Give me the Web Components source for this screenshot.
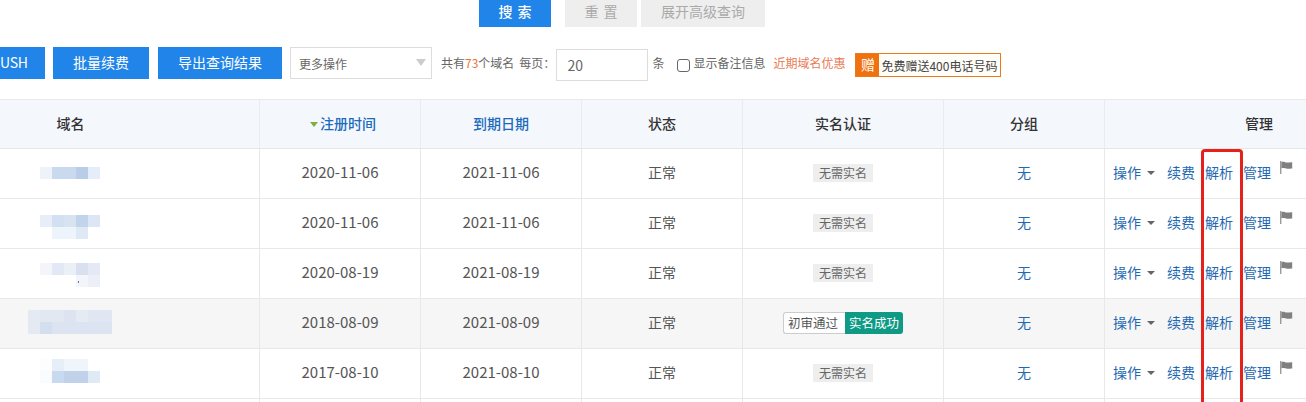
<!DOCTYPE html>
<html lang="zh">
<head>
<meta charset="utf-8">
<title>域名列表</title>
<style>
  html, body { margin: 0; padding: 0; background: #fff; }
  body { width: 1306px; height: 402px; overflow: hidden; font-family: "Noto Sans CJK SC", "Noto Sans", sans-serif; position: relative; }
</style>
</head>
<body>
<search-actions></search-actions>
<list-toolbar></list-toolbar>
<domain-table>
  <domain-row reg="2020-11-06" exp="2021-11-06" top="18" left="40" blocks="eef2f9,c9d9ee,c9d9ee,b9cce8,e5edf8"></domain-row>
  <domain-row reg="2020-11-06" exp="2021-11-06" top="16" left="40" blocks="e8eef8,d3e0f1,d8e3f2,c2d3ec,dde6f4|fff,eef4fb,eef4fb,dfe8f5,fff"></domain-row>
  <domain-row reg="2020-08-19" exp="2021-08-19" top="14" left="40" dot blocks="f3f5fa,e2e8f5,ebeff8,d9e0f0,e5e9f6|fff,fff,fff,f3f5fa,eceff8"></domain-row>
  <domain-row reg="2018-08-09" exp="2021-08-09" top="11" left="28" shade verified blocks="e5eaf2,e1e8f2,e1e8f2,dde4ef,e6ebf3,e0e7f2,e0e7f2|e5eaf2,d3dfee,dbe4f0,dbe4f0,dbe4f0,dbe4f0,dbe4f0"></domain-row>
  <domain-row reg="2017-08-10" exp="2021-08-10" top="10" left="40" blocks="fcfdfe,e6eef8,f0f5fb,f0f5fb,fff|fafbfd,c8daef,bfd2ea,bfd2ea,dfeaf7"></domain-row>
  <domain-row empty></domain-row>
</domain-table>
<red-mark></red-mark>

<script>
const FONT = '"Noto Sans CJK SC", "Noto Sans", sans-serif';

class SearchActions extends HTMLElement {
  constructor() {
    super();
    this.attachShadow({ mode: 'open' });
    this.shadowRoot.innerHTML = `
      <style>
        :host { display: flex; height: 47px; padding-left: 479px; box-sizing: border-box; font-family: ${FONT}; }
        .b { height: 27px; line-height: 23px; text-align: center; font-size: 14px; background: #eee; color: #aaa; box-sizing: border-box; }
        .go { width: 72px; background: #2084e8; color: #fff; margin-right: 14px; letter-spacing: 5px; padding-left: 5px; font-weight: 500; }
        .reset { width: 72px; margin-right: 4px; letter-spacing: 5px; padding-left: 5px; }
        .more { width: 124px; }
      </style>
      <div class="b go">搜索</div>
      <div class="b reset">重置</div>
      <div class="b more">展开高级查询</div>`;
  }
}
customElements.define('search-actions', SearchActions);

class ListToolbar extends HTMLElement {
  constructor() {
    super();
    this.attachShadow({ mode: 'open' });
    this.shadowRoot.innerHTML = `
      <style>
        :host { display: flex; align-items: flex-start; height: 52px; font-family: ${FONT}; font-size: 12px; color: #666; white-space: nowrap; }
        .btn { height: 32px; line-height: 31px; background: #2084e8; color: #fff; font-size: 14px; text-align: center; flex: none; }
        .push { width: 45px; margin-right: 8px; text-align: left; letter-spacing: -.3px; }
        .renew { width: 96px; margin-right: 9px; }
        .export { width: 124px; margin-right: 8px; }
        .select { width: 142px; height: 32px; box-sizing: border-box; border: 1px solid #ddd; display: flex; align-items: center; justify-content: space-between; padding: 0 5px 0 8px; margin-right: 9px; flex: none; }
        .select i { width: 0; height: 0; border-left: 5px solid transparent; border-right: 5px solid transparent; border-top: 7px solid #ccc; margin-top: -2px; }
        .t { line-height: 32px; flex: none; }
        .t b { font-weight: 400; color: #e8763a; }
        .page { margin-right: 1px; margin-left: 5px; }
        .input { width: 92px; height: 32px; margin-top: 2px; box-sizing: border-box; border: 1px solid #ddd; padding-left: 10px; line-height: 30px; font-size: 14px; margin-right: 4px; flex: none; }
        .unit { margin-right: 13px; }
        input { appearance: none; width: 13px; height: 13px; margin: 12px 3px 0 0; border: 1px solid #666; border-radius: 3px; background: #fff; flex: none; }
        .hot { color: #ea7a55; margin-left: 8px; margin-right: 10px; }
        .gift { margin-top: 6px; width: 146px; height: 24px; box-sizing: border-box; border: 1px solid #e87c1e; background: #fffdf8; display: flex; align-items: center; color: #444; flex: none; }
        .gift span { width: 23px; height: 22px; line-height: 21px; background: #f0720f; color: #fff; text-align: center; font-size: 14px; margin-right: 2px; }
      </style>
      <div class="btn push">USH</div>
      <div class="btn renew">批量续费</div>
      <div class="btn export">导出查询结果</div>
      <div class="select">更多操作<i></i></div>
      <div class="t">共有<b>73</b>个域名</div>
      <div class="t page">每页：</div>
      <div class="input">20</div>
      <div class="t unit">条</div>
      <input type="checkbox">
      <div class="t">显示备注信息</div>
      <div class="t hot">近期域名优惠</div>
      <div class="gift"><span>赠</span>免费赠送400电话号码</div>`;
  }
}
customElements.define('list-toolbar', ListToolbar);

class DomainTable extends HTMLElement {
  constructor() {
    super();
    this.attachShadow({ mode: 'open' });
    this.shadowRoot.innerHTML = `
      <style>
        :host { display: block; font-family: ${FONT}; }
        .head { display: grid; grid-template-columns: 260px 161px 161px 161px 201px 161px 1fr; height: 50px; box-sizing: border-box; background: #f4f7fc; border-top: 1px solid #eaeaea; border-bottom: 1px solid #e6e6e6; font-size: 14px; font-weight: 500; color: #333; line-height: 47px; text-align: center; }
        .head div { border-right: 1px solid #e8ebf0; box-sizing: border-box; }
        .head div:last-child { border-right: 0; text-align: left; padding-left: 140px; }
        .head div:first-child { padding-right: 118px; }
        .link { color: #1b6bbd; }
        .sort { padding-left: 6px; }
        .sort::before { content: ""; display: inline-block; width: 0; height: 0; border-left: 4px solid transparent; border-right: 4px solid transparent; border-top: 5px solid #7fae3c; margin-right: 2px; vertical-align: 2px; }
      </style>
      <div class="head">
        <div>域名</div>
        <div class="link sort">注册时间</div>
        <div class="link">到期日期</div>
        <div>状态</div>
        <div>实名认证</div>
        <div>分组</div>
        <div>管理</div>
      </div>
      <slot></slot>`;
  }
}
customElements.define('domain-table', DomainTable);

class DomainRow extends HTMLElement {
  connectedCallback() {
    const root = this.attachShadow({ mode: 'open' });
    const style = `
      <style>
        :host { display: grid; grid-template-columns: 260px 161px 161px 161px 201px 161px 1fr; height: 50px; box-sizing: border-box; border-bottom: 1px solid #e8e8e8; font-family: ${FONT}; font-size: 14px; color: #555; }
        :host([shade]) { background: #f6f6f6; }
        :host([empty]) { height: 3px; border-bottom: 0; }
        :host([empty]) .c { padding-bottom: 0; }
        .c { border-right: 1px solid #e8e8e8; display: flex; align-items: center; justify-content: center; padding-bottom: 4px; box-sizing: border-box; }
        .c:last-child { border-right: 0; justify-content: flex-start; padding-left: 8px; }
        .name { align-items: flex-start; justify-content: flex-start; }
        .mosaic { display: grid; grid-auto-rows: 12px; position: relative; }
        .mosaic div { display: flex; }
        .mosaic span { width: 12px; height: 12px; }
        .mosaic i { position: absolute; left: 38px; top: 18px; width: 1px; height: 2px; background: #5d7399; }
        .date { font-size: 15px; }
        .tag { background: #eee; color: #666; font-size: 12px; line-height: 18px; padding: 0 6px; margin-top: 2px; }
        .pair { display: flex; font-size: 12.5px; line-height: 20px; margin-top: 3px; }
        .pair span:first-child { border: 1px solid #ccc; border-right: 0; border-radius: 3px 0 0 3px; background: #fff; color: #555; padding: 0 7px 0 4px; }
        .pair span:last-child { background: #0e9a85; color: #fff; padding: 1px 4px; border-radius: 0 3px 3px 0; }
        .group { color: #1f69b3; }
        a { color: #1f69b3; text-decoration: none; flex: none; }
        .caret { width: 0; height: 0; border-left: 4px solid transparent; border-right: 4px solid transparent; border-top: 4px solid #666; margin: 2px 12px 0 6px; flex: none; }
        .renew { margin-right: 10px; }
        .parse { margin-right: 10px; }
        svg { margin: -8px 0 0 9px; flex: none; }
      </style>`;
    if (this.hasAttribute('empty')) {
      root.innerHTML = style + '<div class="c"></div><div class="c"></div><div class="c"></div><div class="c"></div><div class="c"></div><div class="c"></div><div class="c"></div>';
      return;
    }
    const blocks = (this.getAttribute('blocks') || '').split('|').map(line =>
      '<div>' + line.split(',').map(col => `<span style="background:#${col}"></span>`).join('') + '</div>').join('');
    const dot = this.hasAttribute('dot') ? '<i></i>' : '';
    const status = this.hasAttribute('verified')
      ? '<div class="pair"><span>初审通过</span><span>实名成功</span></div>'
      : '<div class="tag">无需实名</div>';
    root.innerHTML = style + `
      <div class="c name" style="padding:${this.getAttribute('top')}px 0 0 ${this.getAttribute('left')}px"><div class="mosaic">${blocks}${dot}</div></div>
      <div class="c date">${this.getAttribute('reg')}</div>
      <div class="c date">${this.getAttribute('exp')}</div>
      <div class="c">正常</div>
      <div class="c">${status}</div>
      <div class="c group">无</div>
      <div class="c">
        <a>操作</a><i class="caret"></i><a class="renew">续费</a><a class="parse">解析</a><a>管理</a>
        <svg width="13" height="13" viewBox="0 0 13 13"><path d="M0 0h1.4v13H0z" fill="#9a9a9a"/><path d="M1.4 1c2.6-.9 3.6.4 5.6.5 2 .1 3.6-.4 5.2-.2v6.2c-1.7-.2-3 .4-5 .3-2-.1-3.2-1.2-5.8-.4z" fill="#808080"/></svg>
      </div>`;
  }
}
customElements.define('domain-row', DomainRow);

class RedMark extends HTMLElement {
  constructor() {
    super();
    this.attachShadow({ mode: 'open' });
    this.shadowRoot.innerHTML = `
      <style>
        :host { position: absolute; left: 1201px; top: 149px; width: 42px; height: 253px; box-sizing: border-box; border: 3px solid #e5211c; border-bottom: 0; border-radius: 4px 4px 0 0; }
      </style>`;
  }
}
customElements.define('red-mark', RedMark);
</script>
</body>
</html>
